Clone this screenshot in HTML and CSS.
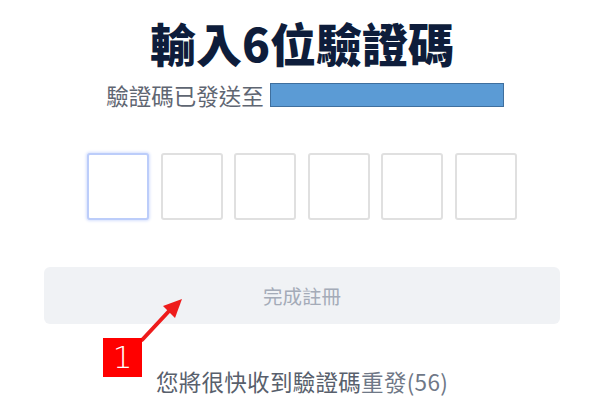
FILE: index.html
```html
<!DOCTYPE html>
<html lang="zh-Hant">
<head>
<meta charset="utf-8">
<link rel="stylesheet" href="styles.css">
</head>
<body>
<main class="page">
  <h1 class="title">輸入6位驗證碼</h1>
  <p class="sub"><span>驗證碼已發送至</span><span class="mask"></span></p>
  <div class="codes">
    <div class="box active"></div>
    <div class="box"></div>
    <div class="box"></div>
    <div class="box"></div>
    <div class="box"></div>
    <div class="box"></div>
  </div>
  <button class="submit">完成註冊</button>
  <p class="resend">您將很快收到驗證碼<span class="link">重發(56)</span></p>
  <svg class="arrow" width="50" height="50" viewBox="0 0 50 50">
    <line x1="5" y1="45" x2="33" y2="15" stroke="#ee1c1c" stroke-width="4" stroke-linecap="round"/>
    <polygon points="45,4 26,11 38,23" fill="#ee1c1c"/>
  </svg>
  <div class="badge">1</div>
</main>
</body>
</html>
```
FILE: styles.css
```css
html, body {
  margin: 0;
  padding: 0;
  background: #ffffff;
}
body {
  font-family: "Noto Sans CJK TC", "Noto Sans", sans-serif;
}
.page {
  position: relative;
  width: 600px;
  height: 420px;
  padding: 14px 0 0 4px;
  box-sizing: border-box;
  display: flex;
  flex-direction: column;
  align-items: center;
}
.title {
  margin: 0;
  font-size: 46px;
  line-height: 56px;
  font-weight: 900;
  color: #0e1d3b;
  letter-spacing: 0;
}
.sub {
  margin: 12px 0 0 6px;
  display: flex;
  align-items: center;
  gap: 6px;
  font-size: 22.5px;
  line-height: 26px;
  color: #5f6672;
}
.mask {
  display: block;
  width: 232px;
  height: 22px;
  background: #5b9bd5;
  border: 1px solid #3f6f9e;
}
.codes {
  margin-top: 45px;
  display: flex;
  gap: 11.5px;
}
.box {
  width: 58px;
  height: 63px;
  border: 2px solid #e0e0e0;
  border-radius: 3px;
  background: #fff;
}
.box.active {
  border-color: #bccdfa;
  box-shadow: 0 0 3px 1px #d6e0fd;
}
.submit {
  margin-top: 47px;
  width: 516px;
  height: 57px;
  border: none;
  border-radius: 6px;
  background: #f0f2f5;
  color: #a4abb8;
  font-family: inherit;
  font-size: 19.5px;
  padding: 0;
}
.resend {
  margin: 44px 0 0 0;
  font-size: 22.5px;
  line-height: 26px;
  letter-spacing: 0.3px;
  color: #58606c;
}
.link {
  color: #6f7887;
}
.arrow {
  position: absolute;
  left: 137px;
  top: 295px;
}
.badge {
  position: absolute;
  left: 103px;
  top: 338px;
  width: 39px;
  height: 39px;
  background: #ff0000;
  color: #fff;
  font-family: "DejaVu Sans", sans-serif;
  font-weight: 300;
  font-size: 31px;
  line-height: 39px;
  text-align: center;
}
```
